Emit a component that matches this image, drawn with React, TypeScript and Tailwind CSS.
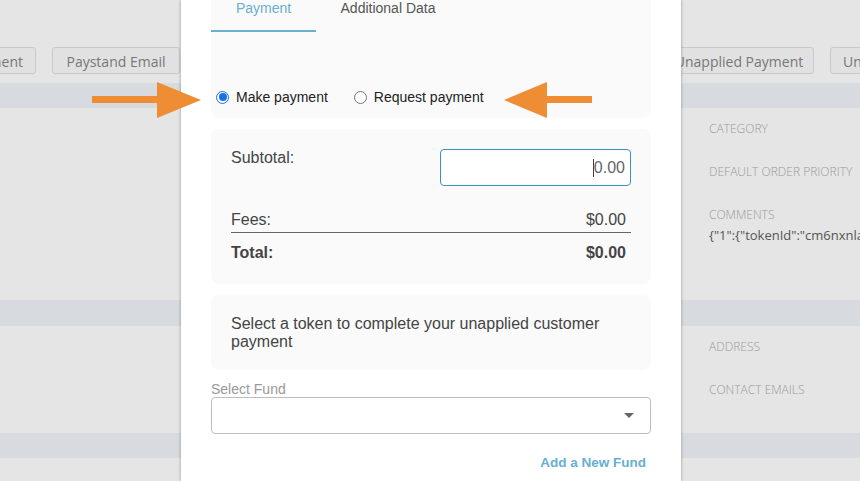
import React from "react";

const bgFont = { fontFamily: '"Open Sans", "DejaVu Sans", sans-serif' };
const uiFont = { fontFamily: '"Liberation Sans", Arial, Helvetica, sans-serif' };

function BgButton({ label, className }: { label: string; className: string }) {
  return (
    <div
      className={`h-[27px] shrink-0 flex items-center pt-[2px] rounded-[3px] border border-[#c9c9c9] bg-[#e1e1e1] text-[14px] text-[#777] whitespace-nowrap overflow-hidden ${className}`}
    >
      {label}
    </div>
  );
}

function Label({ children }: { children: React.ReactNode }) {
  return <div className="text-[12px] leading-4 font-light text-[#9a9a9a] uppercase">{children}</div>;
}

function Radio({ checked, label }: { checked?: boolean; label: string }) {
  return (
    <label className="flex items-center gap-[7px] text-[14px] text-[#222]">
      {checked ? (
        <span className="w-[13px] h-[13px] rounded-full border border-[#1b6fe0] bg-white flex items-center justify-center">
          <span className="w-[8px] h-[8px] rounded-full bg-[#1672ea]" />
        </span>
      ) : (
        <span className="w-[13px] h-[13px] rounded-full border border-[#777] bg-white" />
      )}
      {label}
    </label>
  );
}

function Backdrop() {
  return (
    <div className="w-full h-full" style={bgFont}>
      <div className="h-[47px]" />
      <div className="flex">
        <BgButton label="Payment" className="w-[90px] -ml-[54px] justify-end pr-[12px]" />
        <BgButton label="Paystand Email" className="w-[128px] ml-[16px] justify-center" />
        <BgButton label="Unapplied Payment" className="w-[150px] ml-[484px] justify-center" />
        <BgButton label="Unapplied" className="w-[100px] ml-[16px] pl-[12px]" />
      </div>
      <div className="h-[9px]" />
      <div className="h-[25px] bg-[#d7dade]" />
      <div className="h-[192px] pl-[709px] pt-[13px] flex flex-col">
        <Label>Category</Label>
        <div className="mt-[27px]">
          <Label>Default Order Priority</Label>
        </div>
        <div className="mt-[27px]">
          <Label>Comments</Label>
        </div>
        <div className="mt-[2px] text-[13px] leading-5 text-[#555] whitespace-nowrap">
          {'{"1":{"tokenId":"cm6nxnla4'}
        </div>
      </div>
      <div className="h-[26px] bg-[#d7dade]" />
      <div className="h-[107px] pl-[709px] pt-[13px] flex flex-col">
        <Label>Address</Label>
        <div className="mt-[27px]">
          <Label>Contact Emails</Label>
        </div>
      </div>
      <div className="h-[25px] bg-[#d7dade]" />
    </div>
  );
}

function Modal() {
  return (
    <div
      className="absolute left-[181px] top-0 w-[500px] h-[481px] bg-white shadow-[0_0_3px_rgba(0,0,0,0.35)] px-[30px]"
      style={uiFont}
    >
      <div className="bg-[#fafafa] rounded-b-lg pb-[11px]">
        <div className="flex">
          <div className="w-[105px] h-[32px] border-b-2 border-[#6aaed1] flex justify-center text-[14px] leading-4 text-[#6aaed1]">
            Payment
          </div>
          <div className="w-[144px] h-[32px] flex justify-center text-[14px] leading-4 text-[#555]">
            Additional Data
          </div>
        </div>
        <div className="mt-[55px] h-[20px] pl-[5px] flex items-center gap-[26px]">
          <Radio checked label="Make payment" />
          <Radio label="Request payment" />
        </div>
      </div>

      <div className="mt-[11px] bg-[#fafafa] rounded-lg pt-[20px] pb-[22px] px-[20px] text-[16px] text-[#444]">
        <div className="flex justify-between">
          <div className="leading-[18px]">Subtotal:</div>
          <div className="w-[191px] h-[37px] rounded-[4px] border border-[#3f8fbd] bg-white flex items-center justify-end pr-[5px] text-[#666]">
            <span className="w-px h-[18px] bg-[#444]" />
            <span>0.00</span>
          </div>
        </div>
        <div className="mt-[25px] flex justify-between pr-[5px] leading-[18px] pb-[3px] border-b border-[#666]">
          <span>Fees:</span>
          <span>$0.00</span>
        </div>
        <div className="mt-[11px] flex justify-between pr-[5px] leading-[18px] font-bold">
          <span>Total:</span>
          <span>$0.00</span>
        </div>
      </div>

      <div className="mt-[11px] bg-[#fafafa] rounded-lg pt-[20px] pb-[19px] px-[20px] text-[16px] leading-[18px] text-[#444]">
        Select a token to complete your unapplied customer payment
      </div>

      <div className="mt-[11px] text-[14px] leading-4 text-[#999]">Select Fund</div>
      <div className="h-[37px] rounded-[4px] border border-[#bdbdbd] bg-white flex items-center justify-end pr-[16px]">
        <svg width="10" height="5" viewBox="0 0 10 5">
          <path d="M0 0 L10 0 L5 5 Z" fill="#666" />
        </svg>
      </div>
      <div className="mt-[21px] flex justify-end pr-[5px] text-[13.5px] leading-4 font-bold text-[#67afd1]">
        Add a New Fund
      </div>
    </div>
  );
}

export default function App() {
  return (
    <div className="relative w-[860px] h-[481px] overflow-hidden bg-[#e5e5e5]">
      <Backdrop />
      <Modal />
      <svg className="absolute left-0 top-0 pointer-events-none" width="860" height="481">
        <rect x="92" y="96" width="67" height="7" fill="#ef8d35" />
        <polygon points="157,82 157,118 201,100" fill="#ef8d35" />
        <polygon points="504,100 547,82 547,118" fill="#ef8d35" />
        <rect x="546" y="96" width="46" height="7" fill="#ef8d35" />
      </svg>
    </div>
  );
}
